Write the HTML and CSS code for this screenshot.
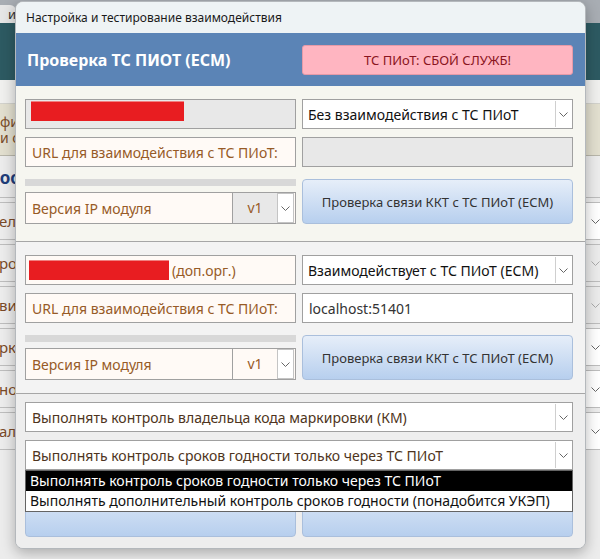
FILE: index.html
```html
<!DOCTYPE html>
<html lang="ru">
<head>
<meta charset="UTF-8">
<title>Настройка и тестирование взаимодействия</title>
<link rel="stylesheet" href="styles.css">
</head>
<body>

<!-- main window behind the dialog -->
<div class="app">
  <div class="tabs"><div class="tab">и</div></div>
  <div class="banner"></div>
  <div class="strip"></div>
  <div class="info">
    <span>фин</span>
    <span>и с</span>
  </div>
  <div class="group-title">роо</div>
  <div class="row"><span class="row-label">ель</span><span class="row-mark tan"></span><span class="row-drop"><svg width="9" height="5" viewBox="0 0 9 5"><polyline points="0.5,0.5 4.5,4.5 8.5,0.5" fill="none" stroke="#666" stroke-width="1"/></svg></span></div>
  <div class="row"><span class="row-label">рос</span><span class="row-mark grey"></span><span class="row-drop off"><svg width="9" height="5" viewBox="0 0 9 5"><polyline points="0.5,0.5 4.5,4.5 8.5,0.5" fill="none" stroke="#aaa" stroke-width="1"/></svg></span></div>
  <div class="row"><span class="row-label">ви</span><span class="row-mark grey"></span><span class="row-drop off"><svg width="9" height="5" viewBox="0 0 9 5"><polyline points="0.5,0.5 4.5,4.5 8.5,0.5" fill="none" stroke="#aaa" stroke-width="1"/></svg></span></div>
  <div class="row"><span class="row-label">рк</span><span class="row-mark green"></span><span class="row-drop"><svg width="9" height="5" viewBox="0 0 9 5"><polyline points="0.5,0.5 4.5,4.5 8.5,0.5" fill="none" stroke="#666" stroke-width="1"/></svg></span></div>
  <div class="row"><span class="row-label">но</span><span class="row-mark tan"></span><span class="row-drop"><svg width="9" height="5" viewBox="0 0 9 5"><polyline points="0.5,0.5 4.5,4.5 8.5,0.5" fill="none" stroke="#666" stroke-width="1"/></svg></span></div>
  <div class="row"><span class="row-label">ал</span><span class="row-mark green"></span><span class="row-drop"><svg width="9" height="5" viewBox="0 0 9 5"><polyline points="0.5,0.5 4.5,4.5 8.5,0.5" fill="none" stroke="#666" stroke-width="1"/></svg></span></div>
</div>

<div class="dialog">
  <div class="titlebar">Настройка и тестирование взаимодействия</div>

  <div class="header">
    <h1>Проверка ТС ПИОТ (ЕСМ)</h1>
    <div class="alert">ТС ПИоТ: СБОЙ СЛУЖБ!</div>
  </div>

  <!-- own organisation -->
  <div class="block block-main">
    <div class="field field-off"><span class="redact redact-wide"></span></div>
    <div class="select">
      <span class="select-value">Без взаимодействия с ТС ПИоТ</span>
      <span class="drop"><svg width="9" height="5" viewBox="0 0 9 5"><polyline points="0.5,0.5 4.5,4.5 8.5,0.5" fill="none" stroke="#666" stroke-width="1"/></svg></span>
    </div>

    <div class="field field-label">URL для взаимодействия с ТС ПИоТ:</div>
    <div class="field field-off"></div>

    <div class="version-wrap">
      <div class="bar"></div>
      <div class="version">
        <span class="version-label">Версия IP модуля</span>
        <span class="version-value locked">v1</span>
        <span class="drop boxed"><svg width="9" height="5" viewBox="0 0 9 5"><polyline points="0.5,0.5 4.5,4.5 8.5,0.5" fill="none" stroke="#666" stroke-width="1"/></svg></span>
      </div>
    </div>
    <button class="btn" type="button">Проверка связи ККТ с ТС ПИоТ (ЕСМ)</button>
  </div>

  <!-- additional organisation -->
  <div class="block block-extra">
    <div class="field field-label"><span class="redact"></span><span class="suffix">(доп.орг.)</span></div>
    <div class="select">
      <span class="select-value">Взаимодействует с ТС ПИоТ (ЕСМ)</span>
      <span class="drop"><svg width="9" height="5" viewBox="0 0 9 5"><polyline points="0.5,0.5 4.5,4.5 8.5,0.5" fill="none" stroke="#666" stroke-width="1"/></svg></span>
    </div>

    <div class="field field-label">URL для взаимодействия с ТС ПИоТ:</div>
    <div class="field field-input">localhost:51401</div>

    <div class="version-wrap">
      <div class="bar"></div>
      <div class="version">
        <span class="version-label">Версия IP модуля</span>
        <span class="version-value">v1</span>
        <span class="drop boxed"><svg width="9" height="5" viewBox="0 0 9 5"><polyline points="0.5,0.5 4.5,4.5 8.5,0.5" fill="none" stroke="#666" stroke-width="1"/></svg></span>
      </div>
    </div>
    <button class="btn" type="button">Проверка связи ККТ с ТС ПИоТ (ЕСМ)</button>
  </div>

  <!-- checks -->
  <div class="block block-checks">
    <div class="select wide">
      <span class="select-value">Выполнять контроль владельца кода маркировки (КМ)</span>
      <span class="drop"><svg width="9" height="5" viewBox="0 0 9 5"><polyline points="0.5,0.5 4.5,4.5 8.5,0.5" fill="none" stroke="#666" stroke-width="1"/></svg></span>
    </div>
    <div class="combo wide">
      <div class="select">
        <span class="select-value">Выполнять контроль сроков годности только через ТС ПИоТ</span>
        <span class="drop"><svg width="9" height="5" viewBox="0 0 9 5"><polyline points="0.5,0.5 4.5,4.5 8.5,0.5" fill="none" stroke="#666" stroke-width="1"/></svg></span>
      </div>
      <ul class="options">
        <li class="selected">Выполнять контроль сроков годности только через ТС ПИоТ</li>
        <li>Выполнять дополнительный контроль сроков годности (понадобится УКЭП)</li>
      </ul>
    </div>
    <button class="btn btn-tall" type="button">Проверить разрешительный режим</button>
    <button class="btn btn-tall" type="button">Проверить срок годности по КМ</button>
  </div>
</div>

</body>
</html>
```

FILE: styles.css
```css
body {
  margin: 0;
  font-family: "Noto Sans", "Open Sans", sans-serif;
  background: #ececec;
  overflow: hidden;
}

/* background window */
.app {
  height: 559px;
  display: flex;
  flex-direction: column;
  background: #ececec;
}
.tabs {
  height: 23px;
  background: #a8adb3;
  display: flex;
  align-items: flex-end;
}
.tab {
  width: 22px;
  height: 18px;
  margin-left: -6px;
  background: #e6e6e6;
  border-radius: 0 6px 0 0;
  font-size: 13px;
  line-height: 18px;
  text-align: right;
  color: #333;
}
.banner {
  height: 57px;
  background: #2d5a62;
}
.strip {
  height: 23px;
  background: #f0f0ee;
  border-bottom: 1px solid #d2d2cc;
}
.info {
  height: 51px;
  background: #e2dfcf;
  border-bottom: 1px solid #b8b6aa;
  display: flex;
  flex-direction: column;
  justify-content: center;
  font-size: 14px;
  line-height: 16px;
  color: #7a4e2a;
}
.group-title {
  height: 41px;
  line-height: 44px;
  margin-left: -11px;
  font-size: 17px;
  font-weight: bold;
  color: #1f3d7a;
  border-bottom: 1px solid #bdbdbd;
}
.row {
  height: 36px;
  margin-top: 4px;
  border-bottom: 1px solid #bdbdbd;
  border-top: 1px solid #bdbdbd;
  display: flex;
  align-items: center;
}
.row-label {
  flex: 1;
  font-size: 15px;
  color: #7a4a28;
  margin-left: -1px;
}
.row-mark {
  width: 7px;
  align-self: stretch;
}
.row-mark.tan { background: #d9b598; }
.row-mark.grey { background: #d4d4d4; }
.row-mark.green { background: #8cb84a; }
.row-drop {
  width: 14px;
  align-self: stretch;
  background: #fff;
  border-left: 1px solid #c4c4c4;
  display: flex;
  align-items: center;
  justify-content: flex-end;
}
.row-drop.off { background: #ebebeb; }

/* dialog */
.dialog {
  position: absolute;
  left: 15px;
  top: 1px;
  width: 571px;
  box-sizing: border-box;
  border: 1px solid #b4b8bc;
  border-radius: 8px;
  overflow: hidden;
  background: #eeeeee;
  box-shadow: 0 4px 14px rgba(0, 0, 0, 0.28);
}
.titlebar {
  height: 31px;
  padding-left: 10px;
  background: #eef3f5;
  font-size: 12px;
  line-height: 31px;
  color: #1a1a1a;
}
.header {
  height: 53px;
  background: #5b84b6;
  display: flex;
  align-items: center;
  justify-content: space-between;
  padding: 0 12px 0 11px;
}
.header h1 {
  margin: 0;
  font-size: 16px;
  color: #fff;
}
.alert {
  width: 271px;
  height: 30px;
  box-sizing: border-box;
  background: #ffb5c1;
  border: 1px solid #e59aa8;
  border-radius: 3px;
  color: #8a1420;
  font-size: 13px;
  line-height: 28px;
  text-align: center;
}

.block {
  display: grid;
  grid-template-columns: 271px 271px;
  grid-template-rows: 30px 30px 49px;
  column-gap: 6px;
  row-gap: 8px;
  padding: 13px 12px 17px 9px;
}
.block > .version-wrap,
.block > .btn {
  margin-top: 4px;
}
.block-main {
  background: #f6f6f0;
}
.block-extra {
  background: #f3f3f3;
  border-top: 1px solid #a6a6a6;
  padding-bottom: 13px;
}
.block-checks {
  background: #eeeeee;
  border-top: 1px solid #a6a6a6;
  grid-template-rows: 30px 30px 59px;
  padding-top: 8px;
  padding-bottom: 11px;
}
.block-checks > .btn {
  margin-top: 4px;
}
.wide {
  grid-column: 1 / 3;
}

.field {
  box-sizing: border-box;
  border: 1px solid #a0a0a0;
  display: flex;
  align-items: center;
  font-size: 14px;
}
.field-off {
  background: #e8e8e8;
}
.field-label {
  background: #fffaf6;
  color: #975b27;
  padding-left: 6px;
}
.field-input {
  background: #fff;
  color: #333;
  padding-left: 6px;
}
.redact {
  width: 140px;
  height: 19px;
  background: #e81d21;
  border-top: 1px solid #f08080;
  margin-left: -3px;
}
.redact-wide {
  width: 153px;
  margin-left: 5px;
  margin-bottom: 6px;
}
.suffix {
  margin-left: 3px;
}

.select {
  box-sizing: border-box;
  height: 30px;
  border: 1px solid #a0a0a0;
  background: #fff;
  display: flex;
  font-size: 14px;
}
.select-value {
  flex: 1;
  align-self: center;
  padding-left: 5px;
  color: #111;
  white-space: nowrap;
  overflow: hidden;
}
.block-checks .select-value {
  color: #4e3420;
  padding-left: 6px;
}
.drop {
  width: 15px;
  margin: 1px;
  border-left: 1px solid #cfcfcf;
  background: #fff;
  display: flex;
  align-items: center;
  justify-content: center;
}
.drop.boxed {
  width: 15px;
  border: 1px solid #c4c4c4;
  margin: 0 1px 0 0;
}

.version-wrap {
  display: flex;
  flex-direction: column;
  gap: 6px;
}
.bar {
  height: 7px;
  background: #d8d8d8;
}
.version {
  box-sizing: border-box;
  height: 32px;
  border: 1px solid #a0a0a0;
  background: #fffaf6;
  display: flex;
  font-size: 14px;
  color: #975b27;
}
.version-label {
  flex: 1;
  align-self: center;
  padding-left: 6px;
}
.version-value {
  width: 44px;
  border-left: 1px solid #a0a0a0;
  text-align: center;
  line-height: 30px;
}
.version-value.locked {
  background: #e8e8e8;
}

.btn {
  font-family: inherit;
  font-size: 13px;
  color: #333;
  border: 1px solid #aabfdc;
  border-radius: 4px;
  background: linear-gradient(#e6eef9, #b7cfee);
  padding: 0;
}
.btn-tall {
  padding-bottom: 14px;
}

.combo {
  position: relative;
}
.options {
  position: absolute;
  top: 100%;
  left: 0;
  right: 0;
  margin: 0;
  padding: 0;
  list-style: none;
  border: 1px solid #646464;
  background: #fff;
  font-size: 14px;
  z-index: 2;
}
.options li {
  height: 20px;
  line-height: 19px;
  padding-left: 4px;
  color: #111;
  white-space: nowrap;
}
.options li.selected {
  background: #000;
  color: #fff;
}
```
